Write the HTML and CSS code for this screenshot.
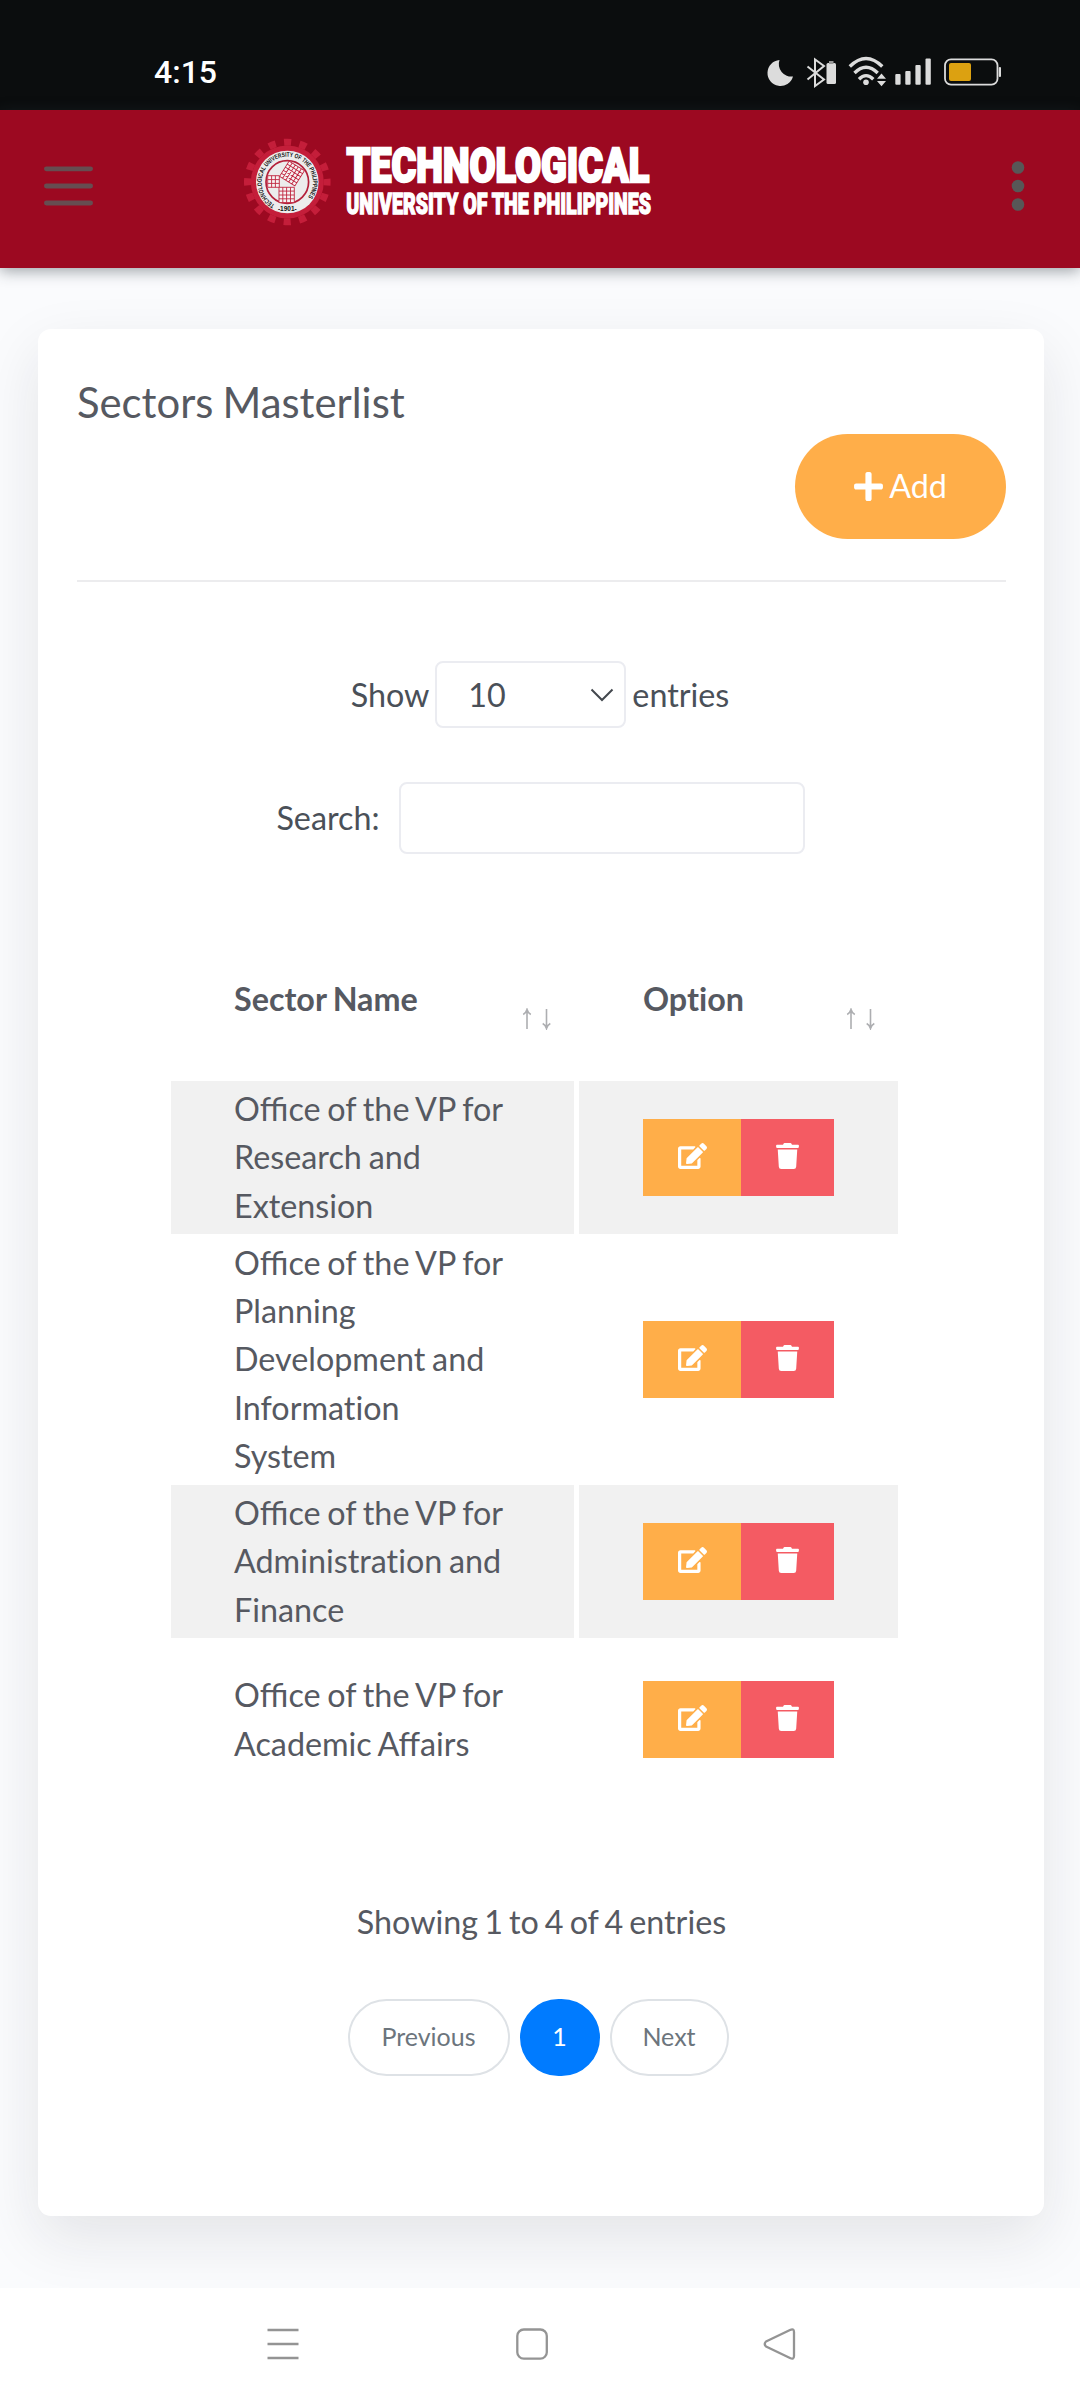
FILE: index.html
```
<!DOCTYPE html>
<html lang="en">
<head>
<meta charset="utf-8">
<title>Sectors Masterlist</title>
<link rel="stylesheet" href="styles.css">
</head>
<body>
<svg class="defs" aria-hidden="true">
  <symbol id="edit" viewBox="0 0 576 512"><path d="M402.6 83.2l90.2 90.2c3.8 3.8 3.8 10 0 13.8L274.4 405.6l-92.8 10.3c-12.4 1.4-22.9-9.1-21.5-21.5l10.3-92.8L388.8 83.2c3.8-3.8 10-3.8 13.8 0zm162-22.9l-48.8-48.8c-15.2-15.2-39.9-15.2-55.2 0l-35.4 35.4c-3.8 3.8-3.8 10 0 13.8l90.2 90.2c3.8 3.8 10 3.8 13.8 0l35.4-35.4c15.2-15.3 15.2-40 0-55.2zM384 346.2V448H64V128h229.8c3.2 0 6.2-1.3 8.5-3.5l40-40c7.6-7.6 2.2-20.5-8.5-20.5H48C21.5 64 0 85.5 0 112v352c0 26.5 21.5 48 48 48h352c26.5 0 48-21.5 48-48V306.2c0-10.7-12.9-16-20.5-8.5l-40 40c-2.2 2.3-3.5 5.3-3.5 8.5z"/></symbol>
  <symbol id="trash" viewBox="0 0 448 512"><path d="M432 32H312l-9.4-18.7A24 24 0 0 0 281.1 0H166.8a23.72 23.72 0 0 0-21.4 13.3L136 32H16A16 16 0 0 0 0 48v32a16 16 0 0 0 16 16h416a16 16 0 0 0 16-16V48a16 16 0 0 0-16-16zM53.2 467a48 48 0 0 0 47.9 45h245.8a48 48 0 0 0 47.9-45L416 128H32z"/></symbol>
  <symbol id="sort" viewBox="0 0 30 22"><path d="M5 21V2M1.2 6.5Q4 5 5 1.5Q6 5 8.800 6.500M24.500 1V20M20.700 15.500Q23.500 17 24.500 20.500Q25.500 17 28.300 15.500" fill="none" stroke="#adaeb1" stroke-width="1.600"/></symbol>
</svg>

<div class="statusbar">
  <span class="clock">4:15</span>
  <svg class="status-icons" width="236" height="34" viewBox="766 55 236 34" fill="#dcdcdc">
    <path d="M779.500 60A13 13 0 1 0 793 76.500A12.500 12.500 0 0 1 779.500 60Z"/>
    <path d="M807.500 66.500L824 79.500L815 86V59.500L824 66L807.500 79.500" fill="none" stroke="#dcdcdc" stroke-width="2"/>
    <rect x="826.500" y="63" width="9.500" height="21" rx="1.500"/><rect x="829" y="61" width="4.500" height="3" fill="#999"/>
    <g fill="none" stroke="#dcdcdc" stroke-width="3.400">
      <path d="M849.800 66.500Q866 50.500 882.300 66.500"/>
      <path d="M854.500 73Q866 61.500 877.700 73"/>
      <path d="M859 79.300Q866 72 873.300 79.300"/>
    </g>
    <circle cx="866" cy="82.300" r="2.800"/>
    <path d="M877 78.700l4.500-5.200 4.500 5.200zM877 81l4.500 5.200 4.500-5.200z"/>
    <rect x="895.300" y="74" width="5.300" height="10.700" rx="1"/>
    <rect x="905.300" y="71" width="5.300" height="13.700" rx="1"/>
    <rect x="915.400" y="65" width="5.300" height="19.700" rx="1"/>
    <rect x="925.500" y="58.500" width="5.300" height="26.200" rx="1"/>
    <rect x="945" y="59.300" width="52.500" height="25.400" rx="6" fill="none" stroke="#dcdcdc" stroke-width="1.800"/>
    <rect x="949" y="63" width="22" height="18" rx="2" fill="#dca111"/>
    <rect x="998.800" y="67" width="2.200" height="10" rx="1"/>
  </svg>
</div>

<header class="navbar">
  <svg width="50" height="42" viewBox="0 0 50 42" stroke="#664d51" stroke-width="4.800" stroke-linecap="round"><path d="M2.400 3.800H46.600M2.400 21H46.600M2.400 38H46.600"/></svg>
  <svg class="brand" width="422" height="110" viewBox="242 127 422 110">
    <defs>
      <path id="ring" d="M274.800 204.700A25.600 25.600 0 1 1 299.800 204.700"/>
    </defs>
    <g transform="translate(287.300 182)">
      <circle r="36.500" fill="#c41e3a"/>
      <circle r="39.800" fill="none" stroke="#c41e3a" stroke-width="7" stroke-dasharray="7.200 8.430" stroke-dashoffset="3.600" />
      <circle r="31.300" fill="#ececec"/>
      <circle r="21.300" fill="#ececec" stroke="#b4203a" stroke-width="1.700"/>
      <g stroke="#c02640" stroke-width=".9" fill="#f7f3f3">
        <path d="M-19.600-6.300h11.600v11.600h-11.600zM-15.700-6.300v11.600M-11.900-6.300v11.600M-19.600-2.400h11.600M-19.600 1.400h11.600"/>
        <path d="M-8.300 5.300h15.300v15.300h-15.300zM-4.500 5.300v15.300M-.7 5.300v15.300M3.200 5.300v15.300M-8.300 9.100h15.300M-8.300 13h15.300M-8.300 16.800h15.300"/>
        <path transform="translate(4.700 -8.500) rotate(32)" d="M-9-9h18v18h-18zM-5.400-9v18M-1.800-9v18M1.800-9v18M5.400-9v18M-9-5.400h18M-9-1.800h18M-9 1.800h18M-9 5.400h18"/>
      </g>
    </g>
    <text class="seal-text"><textPath href="#ring" textLength="123" lengthAdjust="spacingAndGlyphs">TECHNOLOGICAL UNIVERSITY OF THE PHILIPPINES</textPath></text>
    <text class="seal-text" x="287.300" y="210.500" text-anchor="middle">-1901-</text>
    <text class="brand-main" transform="translate(346.500 182.200) scale(.8 1)" textLength="378.500" lengthAdjust="spacingAndGlyphs">TECHNOLOGICAL</text>
    <text class="brand-sub" transform="translate(346.300 214.300) scale(.62 1)" textLength="491.500" lengthAdjust="spacingAndGlyphs">UNIVERSITY OF THE PHILIPPINES</text>
  </svg>
  <svg width="14" height="52" viewBox="0 0 14 52" fill="#575757"><circle cx="7" cy="7.500" r="6.300"/><circle cx="7" cy="26" r="6.300"/><circle cx="7" cy="44.500" r="6.300"/></svg>
</header>

<main class="page">
  <section class="card">
    <h1 class="title">Sectors Masterlist</h1>
    <div class="card-actions">
      <button class="add"><svg width="29" height="33" viewBox="0 0 448 512" fill="#fff"><path d="M416 208H272V64c0-17.670-14.330-32-32-32h-32c-17.670 0-32 14.330-32 32v144H32c-17.670 0-32 14.330-32 32v32c0 17.670 14.330 32 32 32h144v144c0 17.670 14.330 32 32 32h32c17.670 0 32-14.330 32-32V304h144c17.670 0 32-14.330 32-32v-32c0-17.670-14.330-32-32-32z"/></svg><span>Add</span></button>
    </div>
    <hr class="rule">

    <div class="length">
      <span>Show</span>
      <div class="select"><span>10</span><svg width="24" height="14" viewBox="0 0 24 14" fill="none" stroke="#43484e" stroke-width="2"><path d="M1.500 1.500L12 12L22.500 1.500"/></svg></div>
      <span>entries</span>
    </div>
    <label class="search"><span>Search:</span><input class="search-input" type="text"></label>

    <table class="sectors">
      <colgroup><col class="col-name"><col class="col-gap"><col class="col-option"></colgroup>
      <thead>
        <tr>
          <th><div class="th"><span>Sector Name</span><svg class="sort"><use href="#sort"/></svg></div></th>
          <th class="gap"></th>
          <th><div class="th"><span class="plain">Option</span><svg class="sort"><use href="#sort"/></svg></div></th>
        </tr>
      </thead>
      <tbody>
        <tr class="rows-3 striped">
          <td class="name">Office of the VP for<br>Research and<br>Extension</td><td class="gap"></td>
          <td><div class="actions"><button class="btn-edit"><svg class="ic-edit"><use href="#edit"/></svg></button><button class="btn-delete"><svg class="ic-trash"><use href="#trash"/></svg></button></div></td>
        </tr>
        <tr class="rows-5">
          <td class="name">Office of the VP for<br>Planning<br>Development and<br><span class="plain">Information</span><br>System</td><td class="gap"></td>
          <td><div class="actions"><button class="btn-edit"><svg class="ic-edit"><use href="#edit"/></svg></button><button class="btn-delete"><svg class="ic-trash"><use href="#trash"/></svg></button></div></td>
        </tr>
        <tr class="rows-3 striped">
          <td class="name">Office of the VP for<br><span class="plain">Administration and</span><br>Finance</td><td class="gap"></td>
          <td><div class="actions"><button class="btn-edit"><svg class="ic-edit"><use href="#edit"/></svg></button><button class="btn-delete"><svg class="ic-trash"><use href="#trash"/></svg></button></div></td>
        </tr>
        <tr class="rows-2">
          <td class="name">Office of the VP for<br>Academic Affairs</td><td class="gap"></td>
          <td><div class="actions"><button class="btn-edit"><svg class="ic-edit"><use href="#edit"/></svg></button><button class="btn-delete"><svg class="ic-trash"><use href="#trash"/></svg></button></div></td>
        </tr>
      </tbody>
    </table>

    <p class="info">Showing 1 to 4 of 4 entries</p>
    <nav class="pager">
      <span class="page-item prev">Previous</span>
      <span class="page-item active">1</span>
      <span class="page-item next">Next</span>
    </nav>
  </section>
</main>

<footer class="sysnav">
  <svg width="32" height="34" viewBox="267.500 2327.500 32 34" stroke="#949494" stroke-width="2.600"><path d="M268 2330.500H299M268 2344.500H299M268 2358.500H299"/></svg>
  <svg class="home" width="34" height="34" viewBox="516 2327.500 34 34" fill="none" stroke="#949494" stroke-width="2.300"><rect x="518.300" y="2330" width="29.500" height="29.200" rx="6.500"/></svg>
  <svg width="34" height="34" viewBox="763 2327.500 34 34" fill="none" stroke="#949494" stroke-width="2.300" stroke-linejoin="round"><path d="M766 2342L790 2330.500Q794 2328.500 794 2332.500V2356.500Q794 2360.500 790 2358.500L766 2347Q763.500 2344.500 766 2342Z"/></svg>
</footer>
</body>
</html>
```
FILE: styles.css
```
* { box-sizing: border-box; }
body {
  margin: 0;
  width: 1080px;
  height: 2400px;
  display: flex;
  flex-direction: column;
  background: #fafbfd;
  color: #565961;
  font-family: Lato, sans-serif;
  font-size: 32.3px;
  line-height: 48.2px;
  word-spacing: -1.5px;
  overflow: hidden;
}
svg { display: block; flex: none; }
button { border: 0; padding: 0; font: inherit; color: #fff; }
.defs { width: 0; height: 0; position: absolute; }
.plain { font-variant-ligatures: none; }

.statusbar {
  flex: none;
  height: 110px;
  padding: 34px 78px 0 154px;
  display: flex;
  justify-content: space-between;
  align-items: center;
  background: #0b0d0e;
}
.clock {
  font: 500 32px/34px Roboto, sans-serif;
  color: #fff;
}

.navbar {
  flex: none;
  height: 158px;
  padding: 0 55px 0 44px;
  display: flex;
  align-items: center;
  background: #9c0921;
  box-shadow: 0 3px 14px rgba(40, 50, 60, .45);
  position: relative;
}
.navbar svg:first-child, .navbar svg:last-child { margin-top: -7px; }
.navbar svg:last-child { margin-left: auto; }
.navbar .brand { margin-left: 148px; margin-top: -14px; }
.brand-main {
  font: 900 48px Roboto, sans-serif;
  word-spacing: 0;
  fill: #fff;
  stroke: #fff;
  stroke-width: 2.4px;
}
.brand-sub {
  font: 900 29.500px Roboto, sans-serif;
  word-spacing: 0;
  fill: #fff;
  stroke: #fff;
  stroke-width: 1.4px;
}
.seal-text { font: 700 6.500px "Liberation Sans", sans-serif; word-spacing: 0; fill: #111; }

.page { flex: 1; padding: 61px 36px 72px 38px; }
.card {
  height: 1887px;
  padding: 49px 38px 0 39px;
  background: #fff;
  border-radius: 13px;
  box-shadow: 0 22px 60px rgba(30, 32, 37, .1);
}
.title {
  margin: 0;
  font-size: 41.8px;
  font-weight: 400;
  line-height: 48px;
}
.card-actions { display: flex; justify-content: flex-end; margin-top: 8px; }
.add {
  width: 211px;
  height: 105px;
  border-radius: 53px;
  background: #ffae49;
  display: flex;
  align-items: center;
  justify-content: center;
  gap: 6px;
}
.rule { margin: 41px 0 0; border: 0; height: 2px; background: #ececee; }

.length, .search { color: #4a5058; display: flex; justify-content: center; align-items: center; }
.length { margin: 79px 3px 0 0; gap: 6px; }
.length span { padding-top: 2px; }
.select {
  width: 191px;
  height: 67px;
  padding: 0 10px 0 31px;
  display: flex;
  align-items: center;
  justify-content: space-between;
  border: 2px solid #ebecf1;
  border-radius: 8px;
}
.search { margin: 54px 2px 0 0; gap: 19px; }
.search span { padding-top: 1px; }
.search-input {
  width: 406px;
  height: 72px;
  border: 2px solid #ebecf1;
  border-radius: 8px;
  font: inherit;
}

.sectors {
  width: 727px;
  margin: 71px 0 0 94px;
  table-layout: fixed;
  border-collapse: collapse;
}
.col-name { width: 403px; }
.col-gap { width: 5px; }
.col-option { width: 319px; }
.sectors th { height: 156px; padding: 0 22px 0 64px; text-align: left; vertical-align: top; }
.sectors th:first-child { padding-left: 63px; }
.sectors td { padding: 0 0 0 64px; vertical-align: middle; }
.sectors .name { padding-left: 63px; }
.sectors .gap { padding: 0; background: #fff; }
.th { padding-top: 50px; display: flex; justify-content: space-between; align-items: flex-start; }
.sort { width: 30px; height: 22px; margin-top: 33px; }
.striped td { background: #f1f1f1; }
.rows-3 td { height: 153px; }
.rows-5 td { height: 251px; }
.rows-2 td { height: 163px; }
.actions { display: flex; }
.btn-edit, .btn-delete { height: 77px; display: flex; justify-content: center; padding-top: 24px; }
.btn-edit { width: 98px; background: #ffae49; }
.btn-delete { width: 93px; background: #f45b63; }
.ic-edit { width: 29px; height: 26px; fill: #fff; }
.ic-trash { width: 23px; height: 26px; fill: #fff; }

.info { margin: 97px 0 0; text-align: center; word-spacing: -2.2px; }
.pager { display: flex; justify-content: center; gap: 10px; margin: 53px 7px 0 0; }
.page-item {
  height: 77px;
  border: 2px solid #dee2e6;
  border-radius: 39px;
  font-size: 25px;
  line-height: 71px;
  text-align: center;
  color: #6c757d;
}
.prev { width: 162px; }
.next { width: 119px; }
.active { width: 80px; background: #007bff; border-color: #007bff; color: #fff; }

.sysnav {
  flex: none;
  height: 112px;
  padding: 0 283px 0 267px;
  display: flex;
  align-items: center;
  justify-content: space-between;
  background: #fff;
  position: relative;
}
.home { margin-left: 2px; }
```
